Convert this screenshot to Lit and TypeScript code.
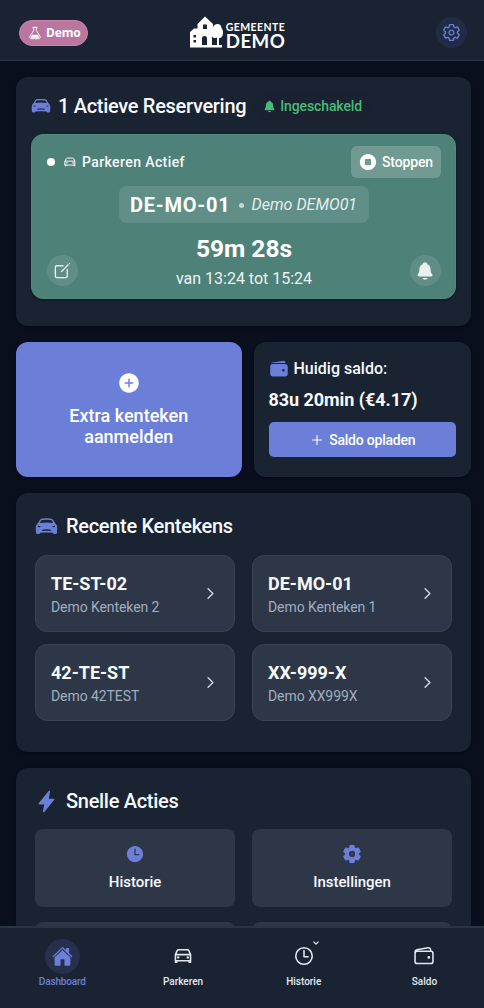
import { LitElement, html, css, svg } from "lit";
import { customElement } from "lit/decorators.js";

const stroked = (d: string) => svg`<path d=${d} fill="none" stroke="currentColor" stroke-width="36" stroke-linecap="round" stroke-linejoin="round"></path>`;
const filled = (d: string) => svg`<path d=${d} fill="currentColor" fill-rule="evenodd"></path>`;

const gearOutline =
  "M262.29 192.31a64 64 0 1057.4 57.4 64.13 64.13 0 00-57.4-57.4zM416.39 256a154.34 154.34 0 01-1.53 20.79l45.21 35.46a10.81 10.81 0 012.45 13.75l-42.77 74a10.81 10.81 0 01-13.14 4.59l-44.9-18.08a16.11 16.11 0 00-15.17 1.75A164.48 164.48 0 01325 400.8a15.94 15.94 0 00-8.82 12.14l-6.73 47.89a11.08 11.08 0 01-10.68 9.17h-85.54a11.11 11.11 0 01-10.69-8.87l-6.72-47.82a16.07 16.07 0 00-9-12.22 155.3 155.3 0 01-21.46-12.57 16 16 0 00-15.11-1.71l-44.89 18.07a10.81 10.81 0 01-13.14-4.58l-42.77-74a10.8 10.8 0 012.45-13.75l38.21-30a16.05 16.05 0 006-14.08c-.36-4.17-.58-8.33-.58-12.5s.21-8.27.58-12.35a16 16 0 00-6.07-13.94l-38.19-30A10.81 10.81 0 0149.48 186l42.77-74a10.81 10.81 0 0113.14-4.59l44.9 18.08a16.11 16.11 0 0015.17-1.75A164.48 164.48 0 01187 111.2a15.94 15.94 0 008.82-12.14l6.73-47.89A11.08 11.08 0 01213.23 42h85.54a11.11 11.11 0 0110.69 8.87l6.72 47.82a16.07 16.07 0 009 12.22 155.3 155.3 0 0121.46 12.57 16 16 0 0015.11 1.71l44.89-18.07a10.81 10.81 0 0113.14 4.58l42.77 74a10.8 10.8 0 01-2.45 13.75l-38.21 30a16.05 16.05 0 00-6.05 14.08c.33 4.14.55 8.3.55 12.47z";
const gearFilled =
  "M470.39 300l-.47-.38-31.56-24.75a16.11 16.11 0 01-6.1-13.33v-11.56a16 16 0 016.11-13.22L469.92 212l.47-.38a26.68 26.68 0 005.9-34.06l-42.71-73.9a1.59 1.59 0 01-.13-.22A26.86 26.86 0 00401 92.14l-.35.13-37.1 14.93a15.94 15.94 0 01-14.47-1.29q-4.92-3.1-10-5.86a15.94 15.94 0 01-8.19-11.82l-5.59-39.59-.12-.72A27.22 27.22 0 00298.76 26h-85.52a26.92 26.92 0 00-26.45 22.39l-.09.56-5.57 39.67a16 16 0 01-8.13 11.82 175.21 175.21 0 00-10 5.82 15.92 15.92 0 01-14.43 1.27l-37.13-15-.35-.14a26.87 26.87 0 00-32.48 11.34l-.13.22-42.77 73.95a26.71 26.71 0 005.9 34.1l.47.38 31.56 24.75a16.11 16.11 0 016.1 13.33v11.56a16 16 0 01-6.11 13.22L42.08 300l-.47.38a26.68 26.68 0 00-5.9 34.06l42.71 73.9a1.59 1.59 0 01.13.22A26.86 26.86 0 00111 419.86l.35-.13 37.07-14.93a15.94 15.94 0 0114.47 1.29q4.92 3.11 10 5.86a15.94 15.94 0 018.19 11.82l5.56 39.59.12.72A27.22 27.22 0 00213.24 486h85.52a26.92 26.92 0 0026.45-22.39l.09-.56 5.57-39.67a16 16 0 018.18-11.82c3.42-1.84 6.76-3.79 10-5.82a15.92 15.92 0 0114.43-1.27l37.13 14.95.35.14a26.85 26.85 0 0032.48-11.34 2.53 2.53 0 01.13-.22l42.71-73.89a26.7 26.7 0 00-5.89-34.11zm-134.48-40.24a80 80 0 11-83.66-83.67 80.21 80.21 0 0183.66 83.67z";

const glyphs: Record<string, unknown> = {
  flask: svg`${stroked("M176 48h160M208 48v93.48a64.09 64.09 0 01-9.88 34.18L73.21 373.49C48.4 412.78 76.63 464 123.08 464h265.84c46.46 0 74.68-51.22 49.87-90.51L313.87 175.66A64.09 64.09 0 01304 141.48V48")}${filled("M148 320h216l46 78q8 34-32 34H134q-38 0-32-34z")}`,
  gear: stroked(gearOutline),
  gearSolid: svg`${filled(gearFilled)}<circle cx="256" cy="256" r="30" fill="currentColor" opacity="0.25"></circle>`,
  carSport: filled(
    "M104 116Q124 84 166 79Q256 70 346 79Q388 84 408 116L452 190Q486 208 492 256Q498 310 490 396Q486 424 458 424H426Q404 424 398 396Q256 386 114 396Q108 424 86 424H54Q26 424 22 396Q14 310 20 256Q26 208 60 190ZM168 112Q144 114 134 130L106 180Q256 152 406 180L378 130Q368 114 344 112Q256 104 168 112ZM64 240Q58 268 84 270Q112 274 134 264Q112 244 64 240ZM448 240Q454 268 428 270Q400 274 378 264Q400 244 448 240ZM178 322Q256 314 334 322Q350 328 360 354Q256 342 152 354Q162 328 178 322Z"
  ),
  car: svg`${stroked("M80 224l37.78-88.15C123.93 121.5 139.6 112 157.11 112h197.78c17.51 0 33.18 9.5 39.33 23.85L432 224M80 224h352v144H80zM112 368v32H80v-32M432 368v32h-32v-32")}<circle cx="144" cy="288" r="28" fill="currentColor"></circle><circle cx="368" cy="288" r="28" fill="currentColor"></circle>`,
  bell: filled(
    "M440.08 341.31c-1.66-2-3.29-4-4.89-5.93-22-26.61-35.31-42.67-35.31-118 0-39-9.33-71-27.72-95-13.56-17.73-31.89-31.18-56.05-41.12a3 3 0 01-.82-.67C306.6 51.49 282.82 32 256 32s-50.59 19.49-59.28 48.56a3.13 3.13 0 01-.81.65c-56.38 23.21-83.78 67.74-83.78 136.14 0 75.36-13.29 91.42-35.31 118-1.6 1.93-3.23 3.89-4.89 5.93a35.16 35.16 0 00-4.65 37.62c6.17 13 19.32 21.07 34.33 21.07H410.5c14.94 0 28-8.06 34.19-21a35.17 35.17 0 00-4.61-37.66zM256 480a80.06 80.06 0 0070.44-42.13 4 4 0 00-3.54-5.87H189.12a4 4 0 00-3.55 5.87A80.06 80.06 0 00256 480z"
  ),
  edit: svg`${stroked("M384 224v184a40 40 0 01-40 40H104a40 40 0 01-40-40V168a40 40 0 0140-40h167.48")}${filled("M459.94 53.25a16.06 16.06 0 00-23.22-.56L424.35 65a8 8 0 000 11.31l11.34 11.32a8 8 0 0011.34 0l12.06-12c6.1-6.09 6.67-16.01.85-22.38zM399.34 90L218.82 270.2a9 9 0 00-2.31 3.93L208.16 299a3.91 3.91 0 004.86 4.86l24.85-8.35a9 9 0 003.93-2.31L422 112.66a9 9 0 000-12.66l-9.95-10a9 9 0 00-12.71 0z")}`,
  stop: filled(
    "M256 48C141.31 48 48 141.31 48 256s93.31 208 208 208 208-93.31 208-208S370.69 48 256 48zM196 176h120a20 20 0 0120 20v120a20 20 0 01-20 20H196a20 20 0 01-20-20V196a20 20 0 0120-20z"
  ),
  addCircle: filled(
    "M256 48C141.31 48 48 141.31 48 256s93.31 208 208 208 208-93.31 208-208S370.69 48 256 48zm80 224h-64v64a16 16 0 01-32 0v-64h-64a16 16 0 010-32h64v-64a16 16 0 0132 0v64h64a16 16 0 010 32z"
  ),
  plus: stroked("M256 112v288M400 256H112"),
  wallet: filled(
    "M95.5 104h320a87.73 87.73 0 0111.18.71 66 66 0 00-77.51-55.56L86 92.05h-.08a66 66 0 00-41.53 26.24A87.57 87.57 0 0195.5 104zM415.5 128h-320a64.07 64.07 0 00-64 64v192a64.07 64.07 0 0064 64h320a64.07 64.07 0 0064-64V192a64.07 64.07 0 00-64-64zM368 320a32 32 0 1132-32 32 32 0 01-32 32z"
  ),
  walletLine: svg`${stroked("M96 144h320a48 48 0 0148 48v192a48 48 0 01-48 48H96a48 48 0 01-48-48V192a48 48 0 0148-48zM411.36 144v-30A50 50 0 00352 64.9L88.64 109.85A50 50 0 0048 159v49")}<circle cx="368" cy="288" r="32" fill="currentColor"></circle>`,
  chevron: svg`<path d="M184 112l144 144-144 144" fill="none" stroke="currentColor" stroke-width="44" stroke-linecap="round" stroke-linejoin="round"></path>`,
  chevronDown: svg`<path d="M112 184l144 144 144-144" fill="none" stroke="currentColor" stroke-width="80" stroke-linecap="round" stroke-linejoin="round"></path>`,
  bolt: filled(
    "M194.82 496a18.36 18.36 0 01-18.1-21.53v-.11L204.83 320H96a16 16 0 01-12.44-26.06L302.73 23a18.45 18.45 0 0132.8 13.71c0 .3-.08.59-.13.89L307.19 192H416a16 16 0 0112.44 26.06L209.24 489a18.45 18.45 0 01-14.42 7z"
  ),
  clock: filled(
    "M256 48C141.13 48 48 141.13 48 256s93.13 208 208 208 208-93.13 208-208S370.87 48 256 48zm96 240h-96a16 16 0 01-16-16V128a16 16 0 0132 0v128h80a16 16 0 010 32z"
  ),
  clockLine: stroked("M256 64C150 64 64 150 64 256s86 192 192 192 192-86 192-192S362 64 256 64zM256 128v144h96"),
  home: filled(
    "M261.56 101.28a8 8 0 00-11.06 0L66.4 277.15a8 8 0 00-2.47 5.79L63.9 448a32 32 0 0032 32H192a16 16 0 0016-16V328a8 8 0 018-8h80a8 8 0 018 8v136a16 16 0 0016 16h96.06a32 32 0 0032-32V282.94a8 8 0 00-2.47-5.79zM490.91 244.15l-74.8-71.56V64a16 16 0 00-16-16h-48a16 16 0 00-16 16v32l-57.92-55.38C272.77 35.14 264.71 32 256 32c-8.68 0-16.72 3.14-22.14 8.63l-212.7 203.5c-6.22 6-7 15.87-1.34 22.37A16 16 0 0043 267.56L250.5 69.28a8 8 0 0111.06 0l207.52 198.28a16 16 0 0022.59-.44c6.14-6.36 5.63-16.86-.76-22.97z"
  ),
};

const icon = (name: string, size: number) =>
  html`<svg class="icon" width=${size} height=${size} viewBox="0 0 512 512" aria-hidden="true">${glyphs[name]}</svg>`;

const plates = [
  ["TE-ST-02", "Demo Kenteken 2"],
  ["DE-MO-01", "Demo Kenteken 1"],
  ["42-TE-ST", "Demo 42TEST"],
  ["XX-999-X", "Demo XX999X"],
];

@customElement("app-root")
export class AppRoot extends LitElement {
  static styles = css`
    :host {
      display: flex;
      flex-direction: column;
      height: 1008px;
      overflow: hidden;
      background: #0a0f1e;
      color: #f7fafc;
      font-family: Roboto, "Liberation Sans", sans-serif;
      font-size: 16px;
      line-height: 1.2;
    }
    * { box-sizing: border-box; }
    .icon { display: block; flex: none; }
    .accent { color: #6c7fd8; }
    header {
      flex: none;
      height: 61px;
      padding: 5px 17px 0 19px;
      display: grid;
      grid-template-columns: 1fr auto 1fr;
      align-items: center;
      background: #1a2332;
      border-bottom: 1px solid #2a3545;
    }
    .badge {
      justify-self: start;
      display: flex;
      align-items: center;
      gap: 4px;
      width: 69px;
      height: 26px;
      padding-left: 8px;
      border: 1px solid #c987ab;
      border-radius: 13px;
      background: #b9779f;
      color: #fff;
      font: 700 12px/1 "Noto Sans", sans-serif;
    }
    .badge span { padding-top: 1px; letter-spacing: -0.1px; }
    .logo { display: flex; align-items: center; gap: 3px; color: #fff; margin-right: 11px; margin-top: -1px; }
    .wordmark { display: flex; flex-direction: column; font-family: Lato, sans-serif; font-weight: 700; padding-top: 6px; }
    .small { font-size: 10.5px; line-height: 12px; letter-spacing: 0.4px; }
    .large { font-size: 18.7px; line-height: 16px; letter-spacing: 0.4px; }
    .round {
      display: flex;
      align-items: center;
      justify-content: center;
      width: 31px;
      height: 31px;
      border-radius: 50%;
      background: rgba(255, 255, 255, 0.1);
      color: #e9f1ef;
    }
    .prefs { justify-self: end; background: #222b45; color: #6c7fd8; }
    main { flex: 1; min-height: 0; overflow: hidden; padding: 16px 13px 0 16px; }
    .card { background: #1a2332; border-radius: 12px; box-shadow: 0 1px 3px rgba(0, 0, 0, 0.35); }
    h2 { margin: 0; font-size: 20px; line-height: 24px; font-weight: 500; letter-spacing: -0.3px; }
    .active { height: 249px; padding: 17px 15px 0; width: 455px; }
    .active-head { display: flex; align-items: center; height: 24px; gap: 8px; }
    .active-head h2 { margin-left: -1px; }
    .enabled {
      display: flex;
      align-items: center;
      gap: 4px;
      height: 27px;
      padding: 0 8px;
      margin-left: 1px;
      border-radius: 14px;
      background: #1a2130;
      color: #48bb78;
      font-size: 14px;
      font-weight: 500;
      letter-spacing: -0.12px;
    }
    .session {
      display: flex;
      flex-direction: column;
      width: 425px;
      height: 165px;
      margin-top: 16px;
      padding: 11px 15px 12px;
      border-radius: 12px;
      border: 1px solid #4c8a7c;
      background: #4e8279;
      box-shadow: 0 1px 3px rgba(0, 0, 0, 0.4);
    }
    .session-top { display: flex; justify-content: space-between; align-items: center; height: 32px; }
    .status { display: flex; align-items: center; font-size: 14px; font-weight: 500; letter-spacing: 0.4px; padding-top: 1px; }
    .dot { width: 8px; height: 8px; border-radius: 50%; background: #fff; margin-right: 8px; }
    .status .icon { margin-right: 5px; }
    .stop {
      display: flex;
      align-items: center;
      justify-content: center;
      gap: 4px;
      width: 90px;
      height: 32px;
      margin-right: -1px;
      padding-right: 1px;
      border-radius: 6px;
      background: #719a93;
      color: #fff;
      font-size: 14px;
      font-weight: 500;
      letter-spacing: -0.15px;
    }
    .plate {
      align-self: center;
      display: flex;
      align-items: center;
      justify-content: center;
      width: 250px;
      height: 37px;
      margin-top: 8px;
      padding-top: 1px;
      border-radius: 8px;
      background: #608f87;
    }
    .plate-number { font-size: 20px; font-weight: 700; letter-spacing: 0.8px; color: #fff; }
    .sep { width: 5px; height: 5px; border-radius: 50%; background: #c5d6d2; margin: 0 8px 0 8px; }
    .plate-name { font-size: 16px; font-style: italic; color: #e5edeb; }
    .session-bottom { display: flex; align-items: flex-end; justify-content: space-between; height: 63px; }
    .session-bottom .round:last-child { margin-right: -1px; }
    .times { text-align: center; align-self: flex-start; padding-top: 11px; }
    .remaining { font-size: 24.5px; font-weight: 700; line-height: 30px; color: #fff; }
    .period { font-size: 16px; line-height: 18px; margin-top: 6px; color: #edf3f1; }
    .duo { display: grid; grid-template-columns: 225.5px 217.5px; gap: 12px; height: 135px; margin: 16px 0; }
    .add {
      display: flex;
      flex-direction: column;
      align-items: center;
      padding-top: 29px;
      border-radius: 12px;
      background: #6c7fd8;
      color: #fff;
      text-align: center;
      font-size: 18px;
      line-height: 21px;
      font-weight: 500;
      box-shadow: 0 1px 3px rgba(0, 0, 0, 0.4);
    }
    .add span { margin-top: 10px; width: 140px; }
    .balance { padding: 17px 15px 0 15px; }
    .balance-label { display: flex; align-items: center; gap: 5px; font-size: 16px; font-weight: 500; height: 20px; }
    .balance-value { font-size: 18px; font-weight: 700; line-height: 22px; margin: 10px 0 11px; letter-spacing: -0.05px; }
    .topup {
      display: flex;
      align-items: center;
      justify-content: center;
      gap: 4px;
      height: 35px;
      padding-top: 1px;
      border-radius: 5px;
      background: #6c7fd8;
      color: #fff;
      font-size: 14px;
      font-weight: 500;
      letter-spacing: -0.22px;
    }
    .section { padding: 20px 19px 0; width: 455px; }
    .recent { height: 259px; margin-bottom: 16px; }
    .section-head { display: flex; align-items: center; gap: 8px; height: 26px; }
    .grid { display: grid; grid-template-columns: 200px 200px; column-gap: 17px; }
    .plates { row-gap: 12px; margin-top: 16px; margin-bottom: 0; }
    .tile {
      display: flex;
      align-items: center;
      justify-content: space-between;
      height: 77px;
      padding: 1px 15px 0 15px;
      border: 1px solid #384354;
      border-radius: 12px;
      background: #2d3748;
    }
    .tile-number { font-size: 18px; line-height: 24px; font-weight: 700; }
    .tile-name { font-size: 14px; line-height: 20px; margin-top: 1px; color: #a0aec0; letter-spacing: -0.08px; }
    .chev { color: #cbd5e0; display: flex; margin-top: -1px; }
    .actions { height: 260px; }
    .tools { row-gap: 15px; margin-top: 15px; }
    .tool {
      display: flex;
      flex-direction: column;
      align-items: center;
      height: 78px;
      padding-top: 15px;
      border-radius: 8px;
      background: #2d3748;
      font-size: 15px;
      line-height: 20px;
      font-weight: 500;
      letter-spacing: -0.05px;
    }
    .tool span { margin-top: 8px; }
    nav {
      flex: none;
      height: 82px;
      padding: 11px 0 0 2px;
      display: grid;
      grid-template-columns: repeat(4, 120.7px);
      background: #1a2332;
      border-top: 2px solid #293444;
    }
    .nav-item { display: flex; flex-direction: column; align-items: center; color: #e2e8f0; font-size: 10px; font-weight: 500; letter-spacing: 0; }
    .nav-icon { position: relative; display: flex; align-items: center; justify-content: center; width: 35px; height: 35px; border-radius: 50%; margin-bottom: 2px; }
    .nav-item:not(.current) .nav-icon { padding-bottom: 1px; }
    .current { color: #6c7fd8; letter-spacing: -0.15px; }
    .current .nav-icon { background: #262f4b; }
    .more { position: absolute; top: 0; right: 1px; }
  `;

  render() {
    return html`
      <header>
        <div class="badge">${icon("flask", 14)}<span>Demo</span></div>
        <div class="logo">
          <svg class="icon" width="33" height="32" viewBox="0 0 33 32" aria-hidden="true">
            <path fill="currentColor" fill-rule="evenodd" d="M0 29V16L4 12.500H7.500V8L15 0.500L23 8V11Q24.500 8 27.500 8Q31 8 31.500 12Q33.500 15 33 18Q32 22.500 29 22V29H32V31.500H0ZM13 8.500V13H17V8.500ZM3.500 19V21.500H6V19ZM3.500 24V26.500H6V24ZM12 29V22Q12 20 14.500 20Q17 20 17 22V29ZM22 29V20.500L23 21.500Q25 22.500 27 21.500V29Z"></path>
          </svg>
          <div class="wordmark"><span class="small">GEMEENTE</span><span class="large">DEMO</span></div>
        </div>
        <div class="round prefs">${icon("gear", 19)}</div>
      </header>
      <main>
        <section class="card active">
          <div class="active-head">
            <span class="accent">${icon("carSport", 20)}</span>
            <h2>1 Actieve Reservering</h2>
            <div class="enabled">${icon("bell", 13)}<span>Ingeschakeld</span></div>
          </div>
          <div class="session">
            <div class="session-top">
              <div class="status"><span class="dot"></span>${icon("car", 14)}<span>Parkeren Actief</span></div>
              <div class="stop">${icon("stop", 20)}<span>Stoppen</span></div>
            </div>
            <div class="plate">
              <span class="plate-number">DE-MO-01</span><span class="sep"></span><span class="plate-name">Demo DEMO01</span>
            </div>
            <div class="session-bottom">
              <div class="round">${icon("edit", 19)}</div>
              <div class="times">
                <div class="remaining">59m 28s</div>
                <div class="period">van 13:24 tot 15:24</div>
              </div>
              <div class="round">${icon("bell", 20)}</div>
            </div>
          </div>
        </section>
        <div class="duo">
          <div class="add">${icon("addCircle", 24)}<span>Extra kenteken aanmelden</span></div>
          <section class="card balance">
            <div class="balance-label"><span class="accent">${icon("wallet", 20)}</span><span>Huidig saldo:</span></div>
            <div class="balance-value">83u 20min (€4.17)</div>
            <div class="topup">${icon("plus", 16)}<span>Saldo opladen</span></div>
          </section>
        </div>
        <section class="card section recent">
          <div class="section-head"><span class="accent">${icon("carSport", 23)}</span><h2>Recente Kentekens</h2></div>
          <div class="grid plates">
            ${plates.map(
              ([number, name]) => html`<div class="tile">
                <div><div class="tile-number">${number}</div><div class="tile-name">${name}</div></div>
                <span class="chev">${icon("chevron", 17)}</span>
              </div>`
            )}
          </div>
        </section>
        <section class="card section actions">
          <div class="section-head"><span class="accent">${icon("bolt", 23)}</span><h2>Snelle Acties</h2></div>
          <div class="grid tools">
            <div class="tool"><i class="accent">${icon("clock", 20)}</i><span>Historie</span></div>
            <div class="tool"><i class="accent">${icon("gearSolid", 20)}</i><span>Instellingen</span></div>
            <div class="tool"></div>
            <div class="tool"></div>
          </div>
        </section>
      </main>
      <nav>
        <div class="nav-item current"><div class="nav-icon">${icon("home", 21)}</div><span>Dashboard</span></div>
        <div class="nav-item"><div class="nav-icon">${icon("car", 22)}</div><span>Parkeren</span></div>
        <div class="nav-item"><div class="nav-icon">${icon("clockLine", 22)}<span class="more">${icon("chevronDown", 8)}</span></div><span>Historie</span></div>
        <div class="nav-item"><div class="nav-icon">${icon("walletLine", 22)}</div><span>Saldo</span></div>
      </nav>
    `;
  }
}
